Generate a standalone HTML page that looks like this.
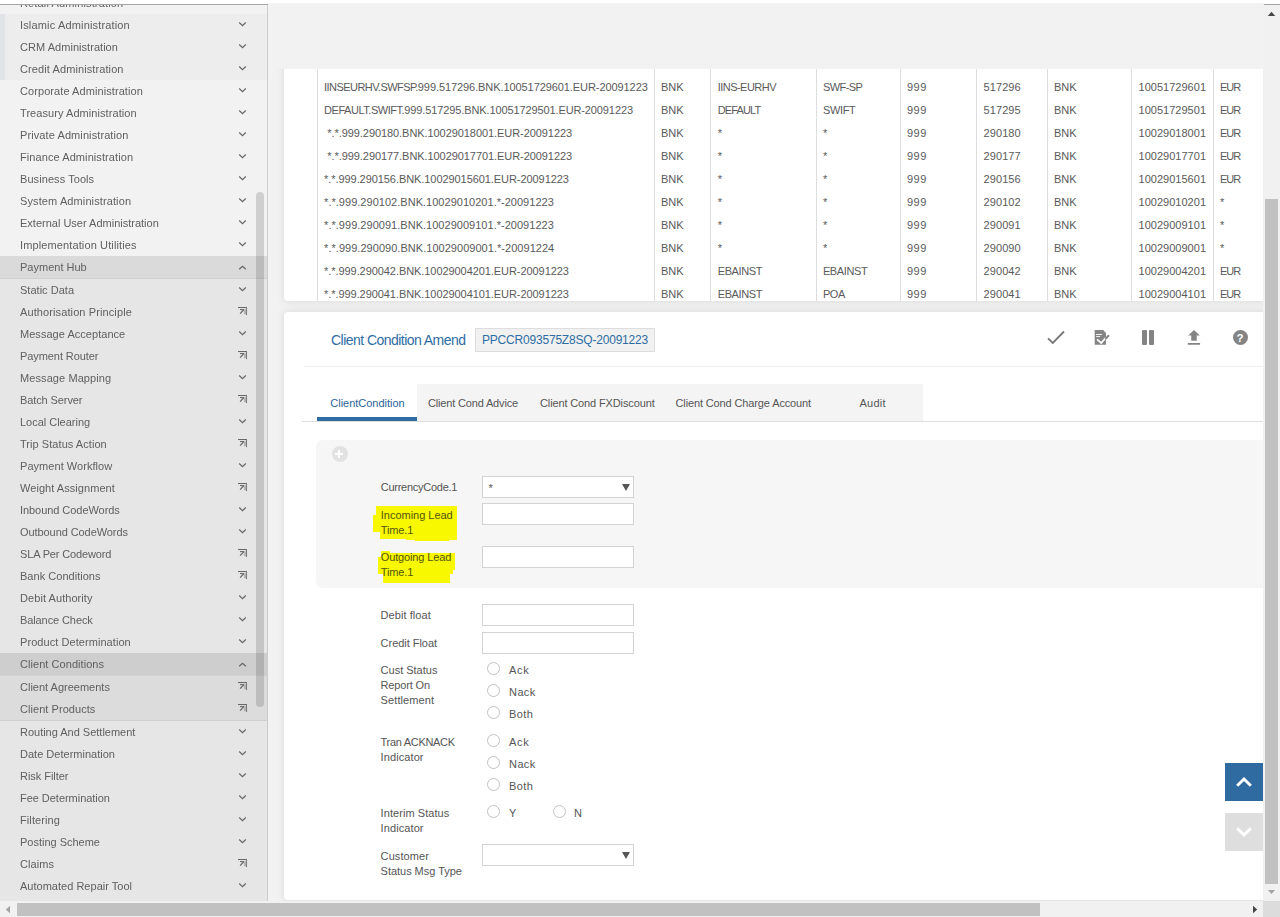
<!DOCTYPE html>
<html><head><meta charset="utf-8"><title>Client Condition Amend</title>
<style>
html,body{margin:0;padding:0;}
body{width:1280px;height:917px;overflow:hidden;position:relative;background:#f2f2f2;font-family:"Liberation Sans",sans-serif;font-size:11px;color:#555;}
div,svg{position:absolute;}
.t{height:16px;line-height:16px;white-space:nowrap;}
.si{color:#606060;will-change:transform}
.tc{color:#5a5a5a}
.lb{color:#555}
.rl{color:#555}
.tab{color:#555}
.ic{left:238px} .ia{left:238px}
.vl{top:69px;height:232px;width:1px;background:#ddd}
.inp{left:482px;width:150px;height:20px;border:1px solid #d3d3d3;background:#fff}
.rd{width:11px;height:11px;border:1px solid #c2c2c2;border-radius:50%;background:#fff}
</style></head><body>
<!-- sidebar -->
<div id="sb" style="left:0;top:0;width:267px;height:901px;overflow:hidden;background:#f2f2f2">
 <div style="left:0;top:14px;width:267px;height:66px;background:#ededed"></div>
 <div style="left:0;top:14px;width:5px;height:66px;background:#e0e4e8"></div>
 <div style="left:0;top:256px;width:267px;height:22px;background:#dadada"></div>
 <div style="left:0;top:278px;width:267px;height:1px;background:#cfcfcf"></div>
 <div style="left:0;top:279px;width:267px;height:374px;background:#e6e6e6"></div>
 <div style="left:0;top:653px;width:267px;height:22px;background:#cecece"></div>
 <div style="left:0;top:675px;width:267px;height:1px;background:#d2d2d2"></div>
 <div style="left:0;top:676px;width:267px;height:44px;background:#dcdcdc"></div>
 <div style="left:0;top:720px;width:267px;height:1px;background:#cfcfcf"></div>
 <div style="left:0;top:721px;width:267px;height:180px;background:#e6e6e6"></div>
<div class="t si" style="left:19.8px;top:-5.1px;letter-spacing:0.141px;">Retail Administration</div>
<svg class="ic" style="top:-1.2999999999999998px" width="9" height="8" viewBox="0 0 9 8"><path d="M1.2 1.5 L4.5 4.6 L7.8 1.5" fill="none" stroke="#666" stroke-width="1.2"/></svg>
<div class="t si" style="left:19.8px;top:17.2px;letter-spacing:0.158px;">Islamic Administration</div>
<svg class="ic" style="top:21px" width="9" height="8" viewBox="0 0 9 8"><path d="M1.2 1.5 L4.5 4.6 L7.8 1.5" fill="none" stroke="#666" stroke-width="1.2"/></svg>
<div class="t si" style="left:19.8px;top:39.2px;letter-spacing:0.041px;">CRM Administration</div>
<svg class="ic" style="top:43px" width="9" height="8" viewBox="0 0 9 8"><path d="M1.2 1.5 L4.5 4.6 L7.8 1.5" fill="none" stroke="#666" stroke-width="1.2"/></svg>
<div class="t si" style="left:19.8px;top:61.2px;letter-spacing:0.100px;">Credit Administration</div>
<svg class="ic" style="top:65px" width="9" height="8" viewBox="0 0 9 8"><path d="M1.2 1.5 L4.5 4.6 L7.8 1.5" fill="none" stroke="#666" stroke-width="1.2"/></svg>
<div class="t si" style="left:19.8px;top:83.2px;letter-spacing:0.075px;">Corporate Administration</div>
<svg class="ic" style="top:87px" width="9" height="8" viewBox="0 0 9 8"><path d="M1.2 1.5 L4.5 4.6 L7.8 1.5" fill="none" stroke="#666" stroke-width="1.2"/></svg>
<div class="t si" style="left:19.8px;top:105.2px;letter-spacing:0.066px;">Treasury Administration</div>
<svg class="ic" style="top:109px" width="9" height="8" viewBox="0 0 9 8"><path d="M1.2 1.5 L4.5 4.6 L7.8 1.5" fill="none" stroke="#666" stroke-width="1.2"/></svg>
<div class="t si" style="left:19.8px;top:127.2px;letter-spacing:0.096px;">Private Administration</div>
<svg class="ic" style="top:131px" width="9" height="8" viewBox="0 0 9 8"><path d="M1.2 1.5 L4.5 4.6 L7.8 1.5" fill="none" stroke="#666" stroke-width="1.2"/></svg>
<div class="t si" style="left:19.8px;top:149.2px;letter-spacing:0.082px;">Finance Administration</div>
<svg class="ic" style="top:153px" width="9" height="8" viewBox="0 0 9 8"><path d="M1.2 1.5 L4.5 4.6 L7.8 1.5" fill="none" stroke="#666" stroke-width="1.2"/></svg>
<div class="t si" style="left:19.8px;top:171.2px;letter-spacing:0.072px;">Business Tools</div>
<svg class="ic" style="top:175px" width="9" height="8" viewBox="0 0 9 8"><path d="M1.2 1.5 L4.5 4.6 L7.8 1.5" fill="none" stroke="#666" stroke-width="1.2"/></svg>
<div class="t si" style="left:19.8px;top:193.2px;letter-spacing:0.109px;">System Administration</div>
<svg class="ic" style="top:197px" width="9" height="8" viewBox="0 0 9 8"><path d="M1.2 1.5 L4.5 4.6 L7.8 1.5" fill="none" stroke="#666" stroke-width="1.2"/></svg>
<div class="t si" style="left:19.8px;top:215.2px;letter-spacing:0.001px;">External User Administration</div>
<svg class="ic" style="top:219px" width="9" height="8" viewBox="0 0 9 8"><path d="M1.2 1.5 L4.5 4.6 L7.8 1.5" fill="none" stroke="#666" stroke-width="1.2"/></svg>
<div class="t si" style="left:19.8px;top:237.2px;letter-spacing:0.121px;">Implementation Utilities</div>
<svg class="ic" style="top:241px" width="9" height="8" viewBox="0 0 9 8"><path d="M1.2 1.5 L4.5 4.6 L7.8 1.5" fill="none" stroke="#666" stroke-width="1.2"/></svg>
<div class="t si" style="left:19.8px;top:259.2px;letter-spacing:0.006px;">Payment Hub</div>
<svg class="ic" style="top:263px" width="9" height="8" viewBox="0 0 9 8"><path d="M1.2 6.3 L4.5 3.2 L7.8 6.3" fill="none" stroke="#666" stroke-width="1.2"/></svg>
<div class="t si" style="left:19.8px;top:282.2px;letter-spacing:0.020px;">Static Data</div>
<svg class="ic" style="top:286px" width="9" height="8" viewBox="0 0 9 8"><path d="M1.2 1.5 L4.5 4.6 L7.8 1.5" fill="none" stroke="#666" stroke-width="1.2"/></svg>
<div class="t si" style="left:19.8px;top:304.2px;letter-spacing:0.107px;">Authorisation Principle</div>
<svg class="ia" style="top:307px" width="10" height="9" viewBox="0 0 10 9"><rect x="5.9" y="2.2" width="2.2" height="5" fill="#aaa" opacity="0.8"/><path d="M0 0.5 H9" fill="none" stroke="#686868" stroke-width="1.1"/><path d="M8.5 0.5 V8.1" fill="none" stroke="#7c7c7c" stroke-width="1.1"/><path d="M2 2.6 H6" fill="none" stroke="#6c6c6c" stroke-width="1.1"/><path d="M5.6 2.9 L2.1 6.6" fill="none" stroke="#666" stroke-width="1.25"/></svg>
<div class="t si" style="left:19.8px;top:326.2px;letter-spacing:0.037px;">Message Acceptance</div>
<svg class="ic" style="top:330px" width="9" height="8" viewBox="0 0 9 8"><path d="M1.2 1.5 L4.5 4.6 L7.8 1.5" fill="none" stroke="#666" stroke-width="1.2"/></svg>
<div class="t si" style="left:19.8px;top:348.2px;letter-spacing:-0.075px;">Payment Router</div>
<svg class="ia" style="top:351px" width="10" height="9" viewBox="0 0 10 9"><rect x="5.9" y="2.2" width="2.2" height="5" fill="#aaa" opacity="0.8"/><path d="M0 0.5 H9" fill="none" stroke="#686868" stroke-width="1.1"/><path d="M8.5 0.5 V8.1" fill="none" stroke="#7c7c7c" stroke-width="1.1"/><path d="M2 2.6 H6" fill="none" stroke="#6c6c6c" stroke-width="1.1"/><path d="M5.6 2.9 L2.1 6.6" fill="none" stroke="#666" stroke-width="1.25"/></svg>
<div class="t si" style="left:19.8px;top:370.2px;letter-spacing:0.087px;">Message Mapping</div>
<svg class="ic" style="top:374px" width="9" height="8" viewBox="0 0 9 8"><path d="M1.2 1.5 L4.5 4.6 L7.8 1.5" fill="none" stroke="#666" stroke-width="1.2"/></svg>
<div class="t si" style="left:19.8px;top:392.2px;letter-spacing:-0.098px;">Batch Server</div>
<svg class="ia" style="top:395px" width="10" height="9" viewBox="0 0 10 9"><rect x="5.9" y="2.2" width="2.2" height="5" fill="#aaa" opacity="0.8"/><path d="M0 0.5 H9" fill="none" stroke="#686868" stroke-width="1.1"/><path d="M8.5 0.5 V8.1" fill="none" stroke="#7c7c7c" stroke-width="1.1"/><path d="M2 2.6 H6" fill="none" stroke="#6c6c6c" stroke-width="1.1"/><path d="M5.6 2.9 L2.1 6.6" fill="none" stroke="#666" stroke-width="1.25"/></svg>
<div class="t si" style="left:19.8px;top:414.2px;letter-spacing:-0.017px;">Local Clearing</div>
<svg class="ic" style="top:418px" width="9" height="8" viewBox="0 0 9 8"><path d="M1.2 1.5 L4.5 4.6 L7.8 1.5" fill="none" stroke="#666" stroke-width="1.2"/></svg>
<div class="t si" style="left:19.8px;top:436.2px;letter-spacing:0.053px;">Trip Status Action</div>
<svg class="ia" style="top:439px" width="10" height="9" viewBox="0 0 10 9"><rect x="5.9" y="2.2" width="2.2" height="5" fill="#aaa" opacity="0.8"/><path d="M0 0.5 H9" fill="none" stroke="#686868" stroke-width="1.1"/><path d="M8.5 0.5 V8.1" fill="none" stroke="#7c7c7c" stroke-width="1.1"/><path d="M2 2.6 H6" fill="none" stroke="#6c6c6c" stroke-width="1.1"/><path d="M5.6 2.9 L2.1 6.6" fill="none" stroke="#666" stroke-width="1.25"/></svg>
<div class="t si" style="left:19.8px;top:458.2px;letter-spacing:0.047px;">Payment Workflow</div>
<svg class="ic" style="top:462px" width="9" height="8" viewBox="0 0 9 8"><path d="M1.2 1.5 L4.5 4.6 L7.8 1.5" fill="none" stroke="#666" stroke-width="1.2"/></svg>
<div class="t si" style="left:19.8px;top:480.2px;letter-spacing:0.052px;">Weight Assignment</div>
<svg class="ia" style="top:483px" width="10" height="9" viewBox="0 0 10 9"><rect x="5.9" y="2.2" width="2.2" height="5" fill="#aaa" opacity="0.8"/><path d="M0 0.5 H9" fill="none" stroke="#686868" stroke-width="1.1"/><path d="M8.5 0.5 V8.1" fill="none" stroke="#7c7c7c" stroke-width="1.1"/><path d="M2 2.6 H6" fill="none" stroke="#6c6c6c" stroke-width="1.1"/><path d="M5.6 2.9 L2.1 6.6" fill="none" stroke="#666" stroke-width="1.25"/></svg>
<div class="t si" style="left:19.8px;top:502.2px;letter-spacing:-0.056px;">Inbound CodeWords</div>
<svg class="ic" style="top:506px" width="9" height="8" viewBox="0 0 9 8"><path d="M1.2 1.5 L4.5 4.6 L7.8 1.5" fill="none" stroke="#666" stroke-width="1.2"/></svg>
<div class="t si" style="left:19.8px;top:524.2px;letter-spacing:-0.074px;">Outbound CodeWords</div>
<svg class="ic" style="top:528px" width="9" height="8" viewBox="0 0 9 8"><path d="M1.2 1.5 L4.5 4.6 L7.8 1.5" fill="none" stroke="#666" stroke-width="1.2"/></svg>
<div class="t si" style="left:19.8px;top:546.2px;letter-spacing:-0.151px;">SLA Per Codeword</div>
<svg class="ia" style="top:549px" width="10" height="9" viewBox="0 0 10 9"><rect x="5.9" y="2.2" width="2.2" height="5" fill="#aaa" opacity="0.8"/><path d="M0 0.5 H9" fill="none" stroke="#686868" stroke-width="1.1"/><path d="M8.5 0.5 V8.1" fill="none" stroke="#7c7c7c" stroke-width="1.1"/><path d="M2 2.6 H6" fill="none" stroke="#6c6c6c" stroke-width="1.1"/><path d="M5.6 2.9 L2.1 6.6" fill="none" stroke="#666" stroke-width="1.25"/></svg>
<div class="t si" style="left:19.8px;top:568.2px;letter-spacing:0.028px;">Bank Conditions</div>
<svg class="ia" style="top:571px" width="10" height="9" viewBox="0 0 10 9"><rect x="5.9" y="2.2" width="2.2" height="5" fill="#aaa" opacity="0.8"/><path d="M0 0.5 H9" fill="none" stroke="#686868" stroke-width="1.1"/><path d="M8.5 0.5 V8.1" fill="none" stroke="#7c7c7c" stroke-width="1.1"/><path d="M2 2.6 H6" fill="none" stroke="#6c6c6c" stroke-width="1.1"/><path d="M5.6 2.9 L2.1 6.6" fill="none" stroke="#666" stroke-width="1.25"/></svg>
<div class="t si" style="left:19.8px;top:590.2px;letter-spacing:0.068px;">Debit Authority</div>
<svg class="ic" style="top:594px" width="9" height="8" viewBox="0 0 9 8"><path d="M1.2 1.5 L4.5 4.6 L7.8 1.5" fill="none" stroke="#666" stroke-width="1.2"/></svg>
<div class="t si" style="left:19.8px;top:612.2px;letter-spacing:-0.099px;">Balance Check</div>
<svg class="ic" style="top:616px" width="9" height="8" viewBox="0 0 9 8"><path d="M1.2 1.5 L4.5 4.6 L7.8 1.5" fill="none" stroke="#666" stroke-width="1.2"/></svg>
<div class="t si" style="left:19.8px;top:634.2px;letter-spacing:0.063px;">Product Determination</div>
<svg class="ic" style="top:638px" width="9" height="8" viewBox="0 0 9 8"><path d="M1.2 1.5 L4.5 4.6 L7.8 1.5" fill="none" stroke="#666" stroke-width="1.2"/></svg>
<div class="t si" style="left:19.8px;top:656.2px;letter-spacing:0.053px;">Client Conditions</div>
<svg class="ic" style="top:660px" width="9" height="8" viewBox="0 0 9 8"><path d="M1.2 6.3 L4.5 3.2 L7.8 6.3" fill="none" stroke="#666" stroke-width="1.2"/></svg>
<div class="t si" style="left:19.8px;top:679.2px;letter-spacing:0.001px;">Client Agreements</div>
<svg class="ia" style="top:682px" width="10" height="9" viewBox="0 0 10 9"><rect x="5.9" y="2.2" width="2.2" height="5" fill="#aaa" opacity="0.8"/><path d="M0 0.5 H9" fill="none" stroke="#686868" stroke-width="1.1"/><path d="M8.5 0.5 V8.1" fill="none" stroke="#7c7c7c" stroke-width="1.1"/><path d="M2 2.6 H6" fill="none" stroke="#6c6c6c" stroke-width="1.1"/><path d="M5.6 2.9 L2.1 6.6" fill="none" stroke="#666" stroke-width="1.25"/></svg>
<div class="t si" style="left:19.8px;top:701.2px;letter-spacing:0.051px;">Client Products</div>
<svg class="ia" style="top:704px" width="10" height="9" viewBox="0 0 10 9"><rect x="5.9" y="2.2" width="2.2" height="5" fill="#aaa" opacity="0.8"/><path d="M0 0.5 H9" fill="none" stroke="#686868" stroke-width="1.1"/><path d="M8.5 0.5 V8.1" fill="none" stroke="#7c7c7c" stroke-width="1.1"/><path d="M2 2.6 H6" fill="none" stroke="#6c6c6c" stroke-width="1.1"/><path d="M5.6 2.9 L2.1 6.6" fill="none" stroke="#666" stroke-width="1.25"/></svg>
<div class="t si" style="left:19.8px;top:724.2px;letter-spacing:-0.011px;">Routing And Settlement</div>
<svg class="ic" style="top:728px" width="9" height="8" viewBox="0 0 9 8"><path d="M1.2 1.5 L4.5 4.6 L7.8 1.5" fill="none" stroke="#666" stroke-width="1.2"/></svg>
<div class="t si" style="left:19.8px;top:746.2px;letter-spacing:0.011px;">Date Determination</div>
<svg class="ic" style="top:750px" width="9" height="8" viewBox="0 0 9 8"><path d="M1.2 1.5 L4.5 4.6 L7.8 1.5" fill="none" stroke="#666" stroke-width="1.2"/></svg>
<div class="t si" style="left:19.8px;top:768.2px;letter-spacing:-0.044px;">Risk Filter</div>
<svg class="ic" style="top:772px" width="9" height="8" viewBox="0 0 9 8"><path d="M1.2 1.5 L4.5 4.6 L7.8 1.5" fill="none" stroke="#666" stroke-width="1.2"/></svg>
<div class="t si" style="left:19.8px;top:790.2px;letter-spacing:-0.034px;">Fee Determination</div>
<svg class="ic" style="top:794px" width="9" height="8" viewBox="0 0 9 8"><path d="M1.2 1.5 L4.5 4.6 L7.8 1.5" fill="none" stroke="#666" stroke-width="1.2"/></svg>
<div class="t si" style="left:19.8px;top:812.2px;letter-spacing:0.103px;">Filtering</div>
<svg class="ic" style="top:816px" width="9" height="8" viewBox="0 0 9 8"><path d="M1.2 1.5 L4.5 4.6 L7.8 1.5" fill="none" stroke="#666" stroke-width="1.2"/></svg>
<div class="t si" style="left:19.8px;top:834.2px;letter-spacing:-0.011px;">Posting Scheme</div>
<svg class="ic" style="top:838px" width="9" height="8" viewBox="0 0 9 8"><path d="M1.2 1.5 L4.5 4.6 L7.8 1.5" fill="none" stroke="#666" stroke-width="1.2"/></svg>
<div class="t si" style="left:19.8px;top:856.2px;letter-spacing:0.068px;">Claims</div>
<svg class="ia" style="top:859px" width="10" height="9" viewBox="0 0 10 9"><rect x="5.9" y="2.2" width="2.2" height="5" fill="#aaa" opacity="0.8"/><path d="M0 0.5 H9" fill="none" stroke="#686868" stroke-width="1.1"/><path d="M8.5 0.5 V8.1" fill="none" stroke="#7c7c7c" stroke-width="1.1"/><path d="M2 2.6 H6" fill="none" stroke="#6c6c6c" stroke-width="1.1"/><path d="M5.6 2.9 L2.1 6.6" fill="none" stroke="#666" stroke-width="1.25"/></svg>
<div class="t si" style="left:19.8px;top:878.2px;letter-spacing:0.015px;">Automated Repair Tool</div>
<svg class="ic" style="top:882px" width="9" height="8" viewBox="0 0 9 8"><path d="M1.2 1.5 L4.5 4.6 L7.8 1.5" fill="none" stroke="#666" stroke-width="1.2"/></svg>
 <div style="left:256px;top:192px;width:8px;height:515px;border-radius:4px;background:rgba(0,0,0,0.14)"></div>
</div>
<div style="left:267px;top:0;width:1px;height:901px;background:#ccc"></div>
<!-- top strip -->
<div style="left:0;top:0;width:1280px;height:3px;background:#fff"></div>
<div style="left:0;top:3px;width:268px;height:1px;background:#fff"></div>
<div style="left:0;top:4px;width:268px;height:1px;background:#a6a5a6"></div>
<!-- table card -->
<div style="left:268px;top:69px;width:995px;height:250px;overflow:hidden"><div style="left:16px;top:-10px;width:1010px;height:242px;background:#fff;border-radius:0 0 0 4px;box-shadow:0 0 9px rgba(0,0,0,0.11)"></div></div>
<div class="vl" style="left:317px"></div><div class="vl" style="left:654px"></div><div class="vl" style="left:710px"></div><div class="vl" style="left:816px"></div><div class="vl" style="left:900px"></div><div class="vl" style="left:976px"></div><div class="vl" style="left:1047px"></div><div class="vl" style="left:1131px"></div><div class="vl" style="left:1213px"></div>
<div class="t tc" style="left:324.1px;top:79.2px;"><span style="letter-spacing:-0.562px">IINSEURHV.SWFSP.</span><span style="letter-spacing:-0.080px">999.517296.BNK.10051729601.EUR-20091223</span></div>
<div class="t tc" style="left:661.1px;top:79.2px;letter-spacing:-0.059px;">BNK</div>
<div class="t tc" style="left:717.7px;top:79.2px;letter-spacing:-0.529px;">IINS-EURHV</div>
<div class="t tc" style="left:822.9px;top:79.2px;letter-spacing:-0.555px;">SWF-SP</div>
<div class="t tc" style="left:907.0px;top:79.2px;letter-spacing:0.473px;">999</div>
<div class="t tc" style="left:983.5px;top:79.2px;letter-spacing:0.099px;">517296</div>
<div class="t tc" style="left:1054.0px;top:79.2px;letter-spacing:-0.059px;">BNK</div>
<div class="t tc" style="left:1138.5px;top:79.2px;letter-spacing:0.021px;">10051729601</div>
<div class="t tc" style="left:1220.1px;top:79.2px;letter-spacing:-1.112px;">EUR</div>
<div class="t tc" style="left:324.1px;top:102.2px;"><span style="letter-spacing:-0.463px">DEFAULT.SWIFT.</span><span style="letter-spacing:-0.111px">999.517295.BNK.10051729501.EUR-20091223</span></div>
<div class="t tc" style="left:661.1px;top:102.2px;letter-spacing:-0.059px;">BNK</div>
<div class="t tc" style="left:717.7px;top:102.2px;letter-spacing:-0.849px;">DEFAULT</div>
<div class="t tc" style="left:822.9px;top:102.2px;letter-spacing:-0.328px;">SWIFT</div>
<div class="t tc" style="left:907.0px;top:102.2px;letter-spacing:0.473px;">999</div>
<div class="t tc" style="left:983.5px;top:102.2px;letter-spacing:0.099px;">517295</div>
<div class="t tc" style="left:1054.0px;top:102.2px;letter-spacing:-0.059px;">BNK</div>
<div class="t tc" style="left:1138.5px;top:102.2px;letter-spacing:0.021px;">10051729501</div>
<div class="t tc" style="left:1220.1px;top:102.2px;letter-spacing:-1.112px;">EUR</div>
<div class="t tc" style="left:327.3px;top:125.2px;letter-spacing:-0.069px;">*.*.999.290180.BNK.10029018001.EUR-20091223</div>
<div class="t tc" style="left:661.1px;top:125.2px;letter-spacing:-0.059px;">BNK</div>
<div class="t tc" style="left:717.7px;top:125.2px;">*</div>
<div class="t tc" style="left:822.9px;top:125.2px;">*</div>
<div class="t tc" style="left:907.0px;top:125.2px;letter-spacing:0.473px;">999</div>
<div class="t tc" style="left:983.5px;top:125.2px;letter-spacing:0.099px;">290180</div>
<div class="t tc" style="left:1054.0px;top:125.2px;letter-spacing:-0.059px;">BNK</div>
<div class="t tc" style="left:1138.5px;top:125.2px;letter-spacing:0.021px;">10029018001</div>
<div class="t tc" style="left:1220.1px;top:125.2px;letter-spacing:-1.112px;">EUR</div>
<div class="t tc" style="left:327.3px;top:148.2px;letter-spacing:-0.069px;">*.*.999.290177.BNK.10029017701.EUR-20091223</div>
<div class="t tc" style="left:661.1px;top:148.2px;letter-spacing:-0.059px;">BNK</div>
<div class="t tc" style="left:717.7px;top:148.2px;">*</div>
<div class="t tc" style="left:822.9px;top:148.2px;">*</div>
<div class="t tc" style="left:907.0px;top:148.2px;letter-spacing:0.473px;">999</div>
<div class="t tc" style="left:983.5px;top:148.2px;letter-spacing:0.099px;">290177</div>
<div class="t tc" style="left:1054.0px;top:148.2px;letter-spacing:-0.059px;">BNK</div>
<div class="t tc" style="left:1138.5px;top:148.2px;letter-spacing:0.021px;">10029017701</div>
<div class="t tc" style="left:1220.1px;top:148.2px;letter-spacing:-1.112px;">EUR</div>
<div class="t tc" style="left:324.1px;top:171.2px;letter-spacing:-0.069px;">*.*.999.290156.BNK.10029015601.EUR-20091223</div>
<div class="t tc" style="left:661.1px;top:171.2px;letter-spacing:-0.059px;">BNK</div>
<div class="t tc" style="left:717.7px;top:171.2px;">*</div>
<div class="t tc" style="left:822.9px;top:171.2px;">*</div>
<div class="t tc" style="left:907.0px;top:171.2px;letter-spacing:0.473px;">999</div>
<div class="t tc" style="left:983.5px;top:171.2px;letter-spacing:0.099px;">290156</div>
<div class="t tc" style="left:1054.0px;top:171.2px;letter-spacing:-0.059px;">BNK</div>
<div class="t tc" style="left:1138.5px;top:171.2px;letter-spacing:0.021px;">10029015601</div>
<div class="t tc" style="left:1220.1px;top:171.2px;letter-spacing:-1.112px;">EUR</div>
<div class="t tc" style="left:324.1px;top:194.2px;letter-spacing:0.024px;">*.*.999.290102.BNK.10029010201.*-20091223</div>
<div class="t tc" style="left:661.1px;top:194.2px;letter-spacing:-0.059px;">BNK</div>
<div class="t tc" style="left:717.7px;top:194.2px;">*</div>
<div class="t tc" style="left:822.9px;top:194.2px;">*</div>
<div class="t tc" style="left:907.0px;top:194.2px;letter-spacing:0.473px;">999</div>
<div class="t tc" style="left:983.5px;top:194.2px;letter-spacing:0.099px;">290102</div>
<div class="t tc" style="left:1054.0px;top:194.2px;letter-spacing:-0.059px;">BNK</div>
<div class="t tc" style="left:1138.5px;top:194.2px;letter-spacing:0.021px;">10029010201</div>
<div class="t tc" style="left:1220.1px;top:194.2px;">*</div>
<div class="t tc" style="left:324.1px;top:217.2px;letter-spacing:0.024px;">*.*.999.290091.BNK.10029009101.*-20091223</div>
<div class="t tc" style="left:661.1px;top:217.2px;letter-spacing:-0.059px;">BNK</div>
<div class="t tc" style="left:717.7px;top:217.2px;">*</div>
<div class="t tc" style="left:822.9px;top:217.2px;">*</div>
<div class="t tc" style="left:907.0px;top:217.2px;letter-spacing:0.473px;">999</div>
<div class="t tc" style="left:983.5px;top:217.2px;letter-spacing:0.099px;">290091</div>
<div class="t tc" style="left:1054.0px;top:217.2px;letter-spacing:-0.059px;">BNK</div>
<div class="t tc" style="left:1138.5px;top:217.2px;letter-spacing:0.021px;">10029009101</div>
<div class="t tc" style="left:1220.1px;top:217.2px;">*</div>
<div class="t tc" style="left:324.1px;top:240.2px;letter-spacing:0.034px;">*.*.999.290090.BNK.10029009001.*-20091224</div>
<div class="t tc" style="left:661.1px;top:240.2px;letter-spacing:-0.059px;">BNK</div>
<div class="t tc" style="left:717.7px;top:240.2px;">*</div>
<div class="t tc" style="left:822.9px;top:240.2px;">*</div>
<div class="t tc" style="left:907.0px;top:240.2px;letter-spacing:0.473px;">999</div>
<div class="t tc" style="left:983.5px;top:240.2px;letter-spacing:0.099px;">290090</div>
<div class="t tc" style="left:1054.0px;top:240.2px;letter-spacing:-0.059px;">BNK</div>
<div class="t tc" style="left:1138.5px;top:240.2px;letter-spacing:0.021px;">10029009001</div>
<div class="t tc" style="left:1220.1px;top:240.2px;">*</div>
<div class="t tc" style="left:324.1px;top:263.2px;letter-spacing:-0.069px;">*.*.999.290042.BNK.10029004201.EUR-20091223</div>
<div class="t tc" style="left:661.1px;top:263.2px;letter-spacing:-0.059px;">BNK</div>
<div class="t tc" style="left:717.7px;top:263.2px;letter-spacing:-0.378px;">EBAINST</div>
<div class="t tc" style="left:822.9px;top:263.2px;letter-spacing:-0.378px;">EBAINST</div>
<div class="t tc" style="left:907.0px;top:263.2px;letter-spacing:0.473px;">999</div>
<div class="t tc" style="left:983.5px;top:263.2px;letter-spacing:0.099px;">290042</div>
<div class="t tc" style="left:1054.0px;top:263.2px;letter-spacing:-0.059px;">BNK</div>
<div class="t tc" style="left:1138.5px;top:263.2px;letter-spacing:0.021px;">10029004201</div>
<div class="t tc" style="left:1220.1px;top:263.2px;letter-spacing:-1.112px;">EUR</div>
<div class="t tc" style="left:324.1px;top:286.2px;letter-spacing:-0.069px;">*.*.999.290041.BNK.10029004101.EUR-20091223</div>
<div class="t tc" style="left:661.1px;top:286.2px;letter-spacing:-0.059px;">BNK</div>
<div class="t tc" style="left:717.7px;top:286.2px;letter-spacing:-0.378px;">EBAINST</div>
<div class="t tc" style="left:822.9px;top:286.2px;letter-spacing:-0.365px;">POA</div>
<div class="t tc" style="left:907.0px;top:286.2px;letter-spacing:0.473px;">999</div>
<div class="t tc" style="left:983.5px;top:286.2px;letter-spacing:0.099px;">290041</div>
<div class="t tc" style="left:1054.0px;top:286.2px;letter-spacing:-0.059px;">BNK</div>
<div class="t tc" style="left:1138.5px;top:286.2px;letter-spacing:0.021px;">10029004101</div>
<div class="t tc" style="left:1220.1px;top:286.2px;letter-spacing:-1.112px;">EUR</div>
<!-- form card -->
<div style="left:268px;top:302px;width:995px;height:599px;overflow:hidden"><div style="left:16px;top:10px;width:1010px;height:588px;background:#fff;border-radius:4px 0 0 4px;box-shadow:0 0 9px rgba(0,0,0,0.11)"></div></div>
<div class="t ttl" style="left:331.0px;top:331.3px;height:18px;line-height:18px;font-size:14px;letter-spacing:-0.540px;color:#2e6da4">Client Condition Amend</div>
<div style="left:475px;top:328px;width:178px;height:22px;border:1px solid #ddd;background:#f1f1f1;box-sizing:content-box"></div>
<div class="t idt" style="left:482.0px;top:332.0px;font-size:12px;letter-spacing:-0.199px;color:#2e6da4">PPCCR093575Z8SQ-20091223</div>
<div style="left:304px;top:366px;width:959px;height:1px;background:#eee"></div>
<!-- toolbar icons -->
<svg style="left:1047px;top:330px" width="18" height="15" viewBox="0 0 18 15"><path d="M1 8.3 L5.8 13 L17 1.5" fill="none" stroke="#777" stroke-width="1.8"/></svg>
<svg style="left:1094px;top:330px" width="16" height="15" viewBox="0 0 16 15"><path d="M0.7 0.1 H9.2 L12 2.9 V14.8 H0.7 Z" fill="#848484"/><path d="M2 4.5 H8 M2 6.6 H6.2" stroke="#fff" stroke-width="0.9"/><path d="M3 9.4 L7.2 13 L12.2 7.4" fill="none" stroke="#fff" stroke-width="1.7"/><path d="M11.3 9 L15 5.3" fill="none" stroke="#848484" stroke-width="2"/></svg>
<div style="left:1142px;top:330px;width:5px;height:15px;background:#848484;border-radius:1px"></div>
<div style="left:1149.4px;top:330px;width:5px;height:15px;background:#848484;border-radius:1px"></div>
<svg style="left:1187px;top:330px" width="14" height="15" viewBox="0 0 14 15"><path d="M7 0 L12.8 5.5 H9.75 V10.75 H4.25 V5.5 H1.2 Z M0.8 13 H13.1 V14.8 H0.8 Z" fill="#848484"/></svg>
<div style="left:1232.5px;top:329.8px;width:15px;height:15px;border-radius:50%;background:#848484;color:#fff;font-weight:bold;font-size:11.5px;line-height:16px;text-align:center">?</div>
<!-- tabs -->
<div style="left:417px;top:384px;width:506px;height:37px;background:#f4f4f4"></div>
<div style="left:302px;top:421px;width:961px;height:1px;background:#ddd"></div>
<div style="left:317px;top:417px;width:100px;height:4px;background:#2e6da4"></div>
<div class="t tab" style="left:330.3px;top:395.2px;letter-spacing:-0.014px;color:#2c6499">ClientCondition</div>
<div class="t tab" style="left:427.9px;top:395.2px;letter-spacing:-0.156px;">Client Cond Advice</div>
<div class="t tab" style="left:540.0px;top:395.2px;letter-spacing:-0.128px;">Client Cond FXDiscount</div>
<div class="t tab" style="left:675.5px;top:395.2px;letter-spacing:-0.126px;">Client Cond Charge Account</div>
<div class="t tab" style="left:859.5px;top:395.2px;letter-spacing:0.232px;">Audit</div>
<!-- gray group -->
<div style="left:316px;top:440px;width:947px;height:148px;background:#f6f6f6;border-radius:7px 0 0 7px"></div>
<div style="left:331.5px;top:446px;width:16px;height:16px;border-radius:50%;background:#e2e2e2"></div>
<div style="left:335px;top:453px;width:8px;height:2px;background:#fff"></div>
<div style="left:338px;top:450px;width:2px;height:8px;background:#fff"></div>
<div class="t lb" style="left:380.8px;top:479.2px;letter-spacing:-0.265px;">CurrencyCode.1</div>
<div class="inp" style="top:476px"></div>
<div class="t lb" style="left:488.5px;top:479.8px;">*</div>
<div style="left:621.5px;top:483.8px;width:0;height:0;border-left:4.2px solid transparent;border-right:4.2px solid transparent;border-top:7.8px solid #555"></div>
<svg style="left:360px;top:495px" width="120" height="100" viewBox="360 495 120 100">
<polygon fill="#f8f800" points="376,506 457,506 457,540 449,540 449,541 415,541 415,540 406,540 406,539 380,539 380,532 373,532 373,515 376,515"/>
<polygon fill="#f8f800" points="381,551 390,551 390,553 455,553 455,570 453,570 453,574 450,574 450,583 383,583 383,574 378,574 378,557 381,557"/>
</svg>
<div class="t lb" style="left:380.8px;top:507.2px;letter-spacing:-0.022px;color:#55550c">Incoming Lead</div>
<div class="t lb" style="left:380.8px;top:522.2px;letter-spacing:-0.122px;color:#55550c">Time.1</div>
<div class="inp" style="top:503px"></div>
<div class="t lb" style="left:380.8px;top:549.2px;letter-spacing:-0.139px;color:#55550c">Outgoing Lead</div>
<div class="t lb" style="left:380.8px;top:564.2px;letter-spacing:-0.122px;color:#55550c">Time.1</div>
<div class="inp" style="top:546px"></div>
<div class="t lb" style="left:380.6px;top:607.2px;letter-spacing:0.057px;">Debit float</div>
<div class="inp" style="top:604px"></div>
<div class="t lb" style="left:380.6px;top:635.2px;letter-spacing:-0.032px;">Credit Float</div>
<div class="inp" style="top:632px"></div>
<div class="t lb" style="left:380.6px;top:662.2px;letter-spacing:-0.006px;">Cust Status</div>
<div class="t lb" style="left:380.6px;top:677.2px;letter-spacing:-0.168px;">Report On</div>
<div class="t lb" style="left:380.6px;top:692.2px;letter-spacing:0.102px;">Settlement</div>
<div class="rd" style="left:487px;top:662px"></div><div class="t rl" style="left:509.1px;top:662.2px;letter-spacing:0.632px;">Ack</div>
<div class="rd" style="left:487px;top:684px"></div><div class="t rl" style="left:509.1px;top:684.2px;letter-spacing:0.346px;">Nack</div>
<div class="rd" style="left:487px;top:706px"></div><div class="t rl" style="left:509.1px;top:706.2px;letter-spacing:0.357px;">Both</div>
<div class="t lb" style="left:380.6px;top:734.2px;letter-spacing:-0.304px;">Tran ACKNACK</div>
<div class="t lb" style="left:380.6px;top:749.2px;letter-spacing:0.089px;">Indicator</div>
<div class="rd" style="left:487px;top:734px"></div><div class="t rl" style="left:509.1px;top:734.2px;letter-spacing:0.632px;">Ack</div>
<div class="rd" style="left:487px;top:756px"></div><div class="t rl" style="left:509.1px;top:756.2px;letter-spacing:0.346px;">Nack</div>
<div class="rd" style="left:487px;top:778px"></div><div class="t rl" style="left:509.1px;top:778.2px;letter-spacing:0.357px;">Both</div>
<div class="t lb" style="left:380.6px;top:805.2px;letter-spacing:0.065px;">Interim Status</div>
<div class="t lb" style="left:380.6px;top:820.2px;letter-spacing:0.089px;">Indicator</div>
<div class="rd" style="left:487px;top:805px"></div><div class="t rl" style="left:509.1px;top:805.2px;">Y</div>
<div class="rd" style="left:553px;top:805px"></div><div class="t rl" style="left:574.1px;top:805.2px;">N</div>
<div class="t lb" style="left:380.6px;top:848.2px;letter-spacing:0.103px;">Customer</div>
<div class="t lb" style="left:380.6px;top:863.2px;letter-spacing:-0.030px;">Status Msg Type</div>
<div class="inp" style="top:844px"></div>
<div style="left:621.5px;top:851.8px;width:0;height:0;border-left:4.2px solid transparent;border-right:4.2px solid transparent;border-top:7.8px solid #555"></div>
<!-- floating buttons -->
<div style="left:1225px;top:763px;width:38px;height:38px;background:#2f6ba1"></div>
<svg style="left:1234.6px;top:775.6px" width="18" height="12" viewBox="0 0 18 12"><path d="M2.2 9.7 L9 3 L15.8 9.7" fill="none" stroke="#fff" stroke-width="2.9"/></svg>
<div style="left:1225px;top:813px;width:38px;height:38px;background:#dedede"></div>
<svg style="left:1234.6px;top:825.6px" width="18" height="12" viewBox="0 0 18 12"><path d="M2.2 2.3 L9 9 L15.8 2.3" fill="none" stroke="#fff" stroke-width="2.9"/></svg>
<!-- scrollbars -->
<div style="left:1263px;top:3px;width:17px;height:898px;background:#f1f1f1"></div>
<div style="left:1264px;top:3px;width:16px;height:1px;background:#fff"></div>
<div style="left:1264px;top:4px;width:16px;height:1px;background:#a6a5a6"></div>
<div style="left:1265px;top:199px;width:13px;height:685px;background:#c1c1c1"></div>
<div style="left:0;top:901px;width:1263px;height:16px;background:#f1f1f1"></div>
<div style="left:1263px;top:901px;width:17px;height:16px;background:#dcdcdc"></div>
<div style="left:17px;top:903px;width:1023px;height:13px;background:#c1c1c1"></div>
<svg style="left:0;top:0" width="1280" height="917" viewBox="0 0 1280 917">
<polygon points="1267.8,16 1275.2,16 1271.5,11.8" fill="#454545"/>
<polygon points="1267.9,890 1275.1,890 1271.5,894" fill="#a3a3a3"/>
<polygon points="1253,905.8 1253,913.2 1257.2,909.5" fill="#454545"/>
<polygon points="10,905.8 10,913.2 5.8,909.5" fill="#a3a3a3"/>
</svg>
</body></html>
